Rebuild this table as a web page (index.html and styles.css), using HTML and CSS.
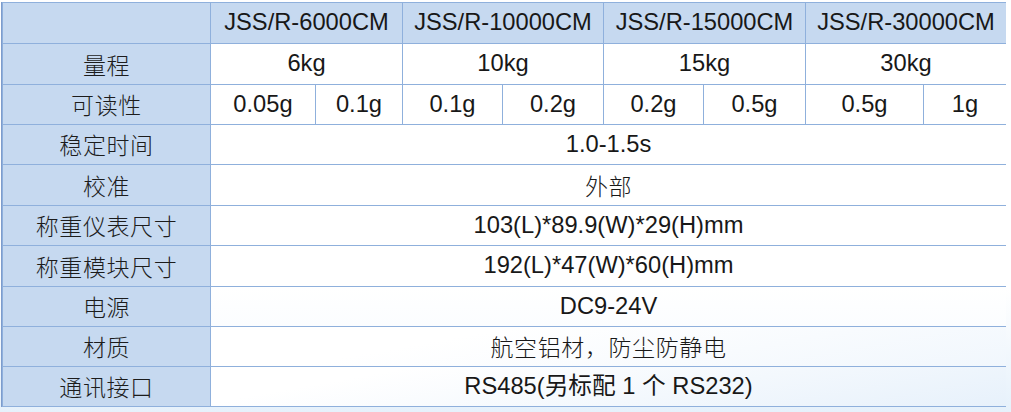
FILE: index.html
```html
<!DOCTYPE html>
<html lang="zh-CN">
<head>
<meta charset="utf-8">
<title>规格参数</title>
<link rel="stylesheet" href="styles.css">
</head>
<body>
<div class="page">
  <div class="spec">
    <div class="cell head label"></div>
    <div class="cell head span2">JSS/R-6000CM</div>
    <div class="cell head span2">JSS/R-10000CM</div>
    <div class="cell head span2">JSS/R-15000CM</div>
    <div class="cell head span2">JSS/R-30000CM</div>

    <div class="cell label">量程</div>
    <div class="cell span2">6kg</div>
    <div class="cell span2">10kg</div>
    <div class="cell span2">15kg</div>
    <div class="cell span2">30kg</div>

    <div class="cell label">可读性</div>
    <div class="cell">0.05g</div>
    <div class="cell">0.1g</div>
    <div class="cell">0.1g</div>
    <div class="cell">0.2g</div>
    <div class="cell">0.2g</div>
    <div class="cell">0.5g</div>
    <div class="cell">0.5g</div>
    <div class="cell">1g</div>

    <div class="cell label">稳定时间</div>
    <div class="cell all">1.0-1.5s</div>

    <div class="cell label">校准</div>
    <div class="cell all cjk">外部</div>

    <div class="cell label">称重仪表尺寸</div>
    <div class="cell all">103(L)*89.9(W)*29(H)mm</div>

    <div class="cell label">称重模块尺寸</div>
    <div class="cell all">192(L)*47(W)*60(H)mm</div>

    <div class="cell label">电源</div>
    <div class="cell all low1">DC9-24V</div>

    <div class="cell label">材质</div>
    <div class="cell all cjk low2">航空铝材，防尘防静电</div>

    <div class="cell label">通讯接口</div>
    <div class="cell all low3">RS485(另标配 1 个 RS232)</div>
  </div>
</div>
</body>
</html>
```

FILE: styles.css
```css
html, body {
  margin: 0;
  padding: 0;
}

body {
  width: 1011px;
  height: 412px;
  overflow: hidden;
  background: linear-gradient(180deg, #ffffff 0%, #ffffff 70%, #e6f1fb 100%);
  font-family: "Liberation Sans", Arial, "Noto Sans CJK SC", sans-serif;
  color: #181818;
}

.page {
  padding: 2px 0 0 2px;
}

.spec {
  display: grid;
  width: 1005px;
  box-sizing: border-box;
  grid-template-columns: 207px 104px 86px 99px 100px 99px 101px 117px 82px;
  grid-template-rows: 40px 40px 39px 39px 40px 39px 40px 39px 39px 39px;
  gap: 1px;
  padding: 1px;
  background: #8fb0dc;
  border-left: 1px solid #7d9ccc;
  margin-left: -1px;
}

.cell {
  background: #ffffff;
  display: flex;
  align-items: center;
  justify-content: center;
  font-size: 23.7px;
  line-height: 1;
  white-space: nowrap;
}

.head {
  background: #c6d9f0;
}

.label {
  background: #c6d9f0;
  font-family: "Noto Sans CJK SC", sans-serif;
  font-weight: 300;
  font-size: 23px;
  letter-spacing: 0.6px;
  color: #1c1c1c;
}

.span2 {
  grid-column: span 2;
}

.all {
  grid-column: span 8;
}

.cjk {
  font-family: "Noto Sans CJK SC", sans-serif;
  font-weight: 300;
  font-size: 23px;
  letter-spacing: 0.6px;
}

.low1 {
  background: linear-gradient(180deg, #ffffff 0%, #fbfdff 100%);
}

.low2 {
  background: linear-gradient(170deg, #ffffff 30%, #f1f7fd 100%);
}

.low3 {
  background: linear-gradient(170deg, #ffffff 20%, #e7f1fb 100%);
}
```
